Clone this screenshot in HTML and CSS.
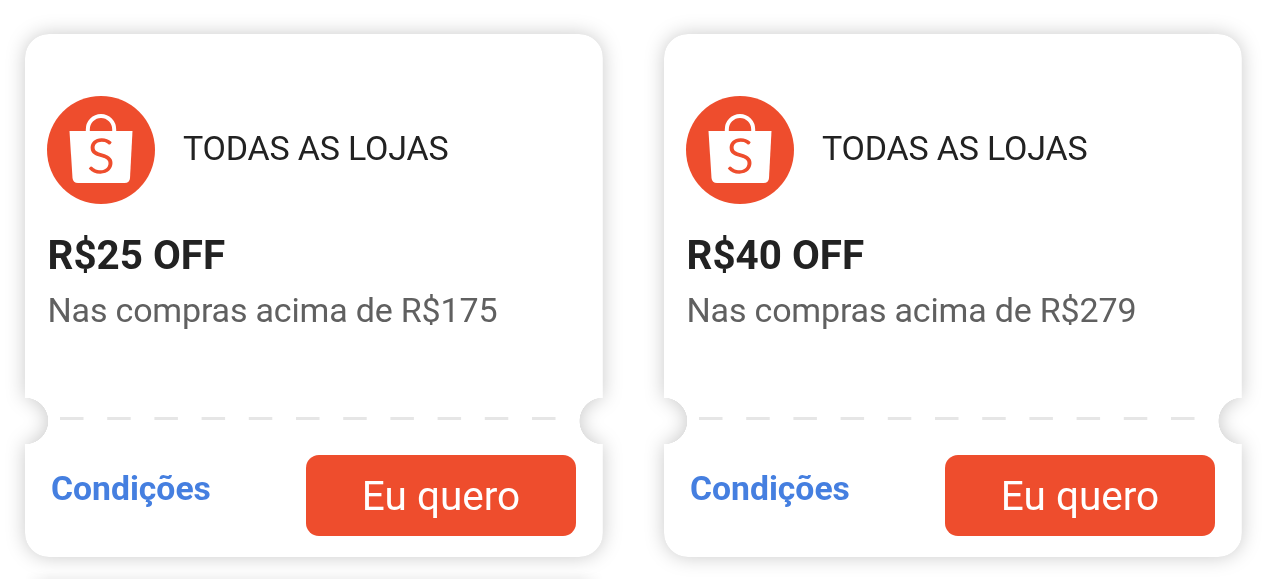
FILE: index.html
```html
<!DOCTYPE html>
<html lang="pt-BR">
  <head>
    <meta charset="UTF-8" />
    <meta name="viewport" content="width=device-width, initial-scale=1.0" />
    <title>Cupons</title>
    <link rel="stylesheet" href="styles.css">
  </head>
  <body>
    <div class="coupons">
      <div class="coupon-shadow">
        <div class="coupon">
          <div class="coupon-info">
            <div class="store">
              <svg class="store-logo" viewBox="0 0 108 108">
                <circle cx="54" cy="54" r="54" fill="#ee4d2d" />
                <path d="M40.800 37V33.500A13.200 13.500 0 0 1 67.200 33.500V37" fill="none" stroke="#fff" stroke-width="4" />
                <path d="M22.500 35H85.500L83 82Q82.700 87 77.500 87H31Q26 87 25.500 82Z" fill="#fff" />
                <text class="logo-letter" x="54" y="77" text-anchor="middle" textLength="27" lengthAdjust="spacingAndGlyphs">S</text>
              </svg>
              <span class="store-name">TODAS AS LOJAS</span>
            </div>
            <h2 class="discount">R$25 OFF</h2>
            <p class="minimum">Nas compras acima de R$175</p>
          </div>
          <svg class="divider" viewBox="0 0 498 3">
            <line x1="0" y1="1.5" x2="498" y2="1.5" />
          </svg>
          <div class="coupon-actions">
            <a class="terms">Condições</a>
            <button class="claim">Eu quero</button>
          </div>
        </div>
      </div>

      <div class="coupon-shadow">
        <div class="coupon">
          <div class="coupon-info">
            <div class="store">
              <svg class="store-logo" viewBox="0 0 108 108">
                <circle cx="54" cy="54" r="54" fill="#ee4d2d" />
                <path d="M40.800 37V33.500A13.200 13.500 0 0 1 67.200 33.500V37" fill="none" stroke="#fff" stroke-width="4" />
                <path d="M22.500 35H85.500L83 82Q82.700 87 77.500 87H31Q26 87 25.500 82Z" fill="#fff" />
                <text class="logo-letter" x="54" y="77" text-anchor="middle" textLength="27" lengthAdjust="spacingAndGlyphs">S</text>
              </svg>
              <span class="store-name">TODAS AS LOJAS</span>
            </div>
            <h2 class="discount">R$40 OFF</h2>
            <p class="minimum">Nas compras acima de R$279</p>
          </div>
          <svg class="divider" viewBox="0 0 498 3">
            <line x1="0" y1="1.5" x2="498" y2="1.5" />
          </svg>
          <div class="coupon-actions">
            <a class="terms">Condições</a>
            <button class="claim">Eu quero</button>
          </div>
        </div>
      </div>

      <div class="next-row"></div>
    </div>
  </body>
</html>
```

FILE: styles.css
```css
body {
  margin: 0;
  background: #fff;
  font-family: Roboto, sans-serif;
}
.coupons {
  display: grid;
  grid-template-columns: 578px 578px;
  gap: 14px 61px;
  padding: 34px 0 0 25px;
}
.coupon-shadow {
  filter: drop-shadow(0 0 9.5px rgba(0, 0, 0, 0.21));
}
.coupon {
  box-sizing: border-box;
  height: 523px;
  padding: 62px 27px 22px 23px;
  border-radius: 24px;
  background: #fff;
  /* half-circle notches on both sides */
  mask:
    radial-gradient(circle at 0 387px, transparent 23px, #000 23.5px) left / 51% 100% no-repeat,
    radial-gradient(circle at 100% 387px, transparent 23px, #000 23.5px) right / 51% 100% no-repeat;
}
.coupon-info {
  height: 287px;
}
.store {
  display: flex;
  align-items: center;
  gap: 27px;
}
.store-logo {
  width: 108px;
  height: 108px;
  margin: 0 1px 0 -1px;
}
.logo-letter {
  font-family: Lato, sans-serif;
  font-size: 47px;
  font-weight: 300;
  fill: #ee4d2d;
  stroke: #ee4d2d;
  stroke-width: 1.4;
}
.store-name {
  margin-top: -4px;
  font-size: 34px;
  line-height: 40px;
  letter-spacing: -0.2px;
  color: #222;
}
.discount {
  margin: 26px 0 0 -0.5px;
  font-size: 40.4px;
  line-height: 51px;
  font-weight: bold;
  color: #222;
}
.minimum {
  margin: 8px 0 0 -0.5px;
  font-size: 34px;
  line-height: 42px;
  letter-spacing: -0.18px;
  color: #606060;
}
.divider {
  display: block;
  width: 498px;
  height: 3px;
  margin: 34px 0 0 12px;
}
.divider line {
  stroke: #e6e6e6;
  stroke-width: 3;
  stroke-dasharray: 23.5 23.7;
}
.coupon-actions {
  display: flex;
  justify-content: space-between;
  align-items: flex-start;
  margin-top: 35px;
  padding-left: 3px;
}
.terms {
  margin-top: 14px;
  font-size: 33.7px;
  line-height: 40px;
  font-weight: bold;
  color: #457fe0;
}
.claim {
  width: 270px;
  height: 81px;
  padding: 1px 0 0;
  border: none;
  border-radius: 13px;
  background: #ee4d2d;
  color: #fff;
  font-family: inherit;
  font-size: 40.5px;
}
/* top edge of the shadow cast by the next row */
.next-row {
  height: 8px;
  background: linear-gradient(transparent, rgba(0, 0, 0, 0.05));
  mask: linear-gradient(to right, transparent, #000 24px, #000 554px, transparent);
}
```
